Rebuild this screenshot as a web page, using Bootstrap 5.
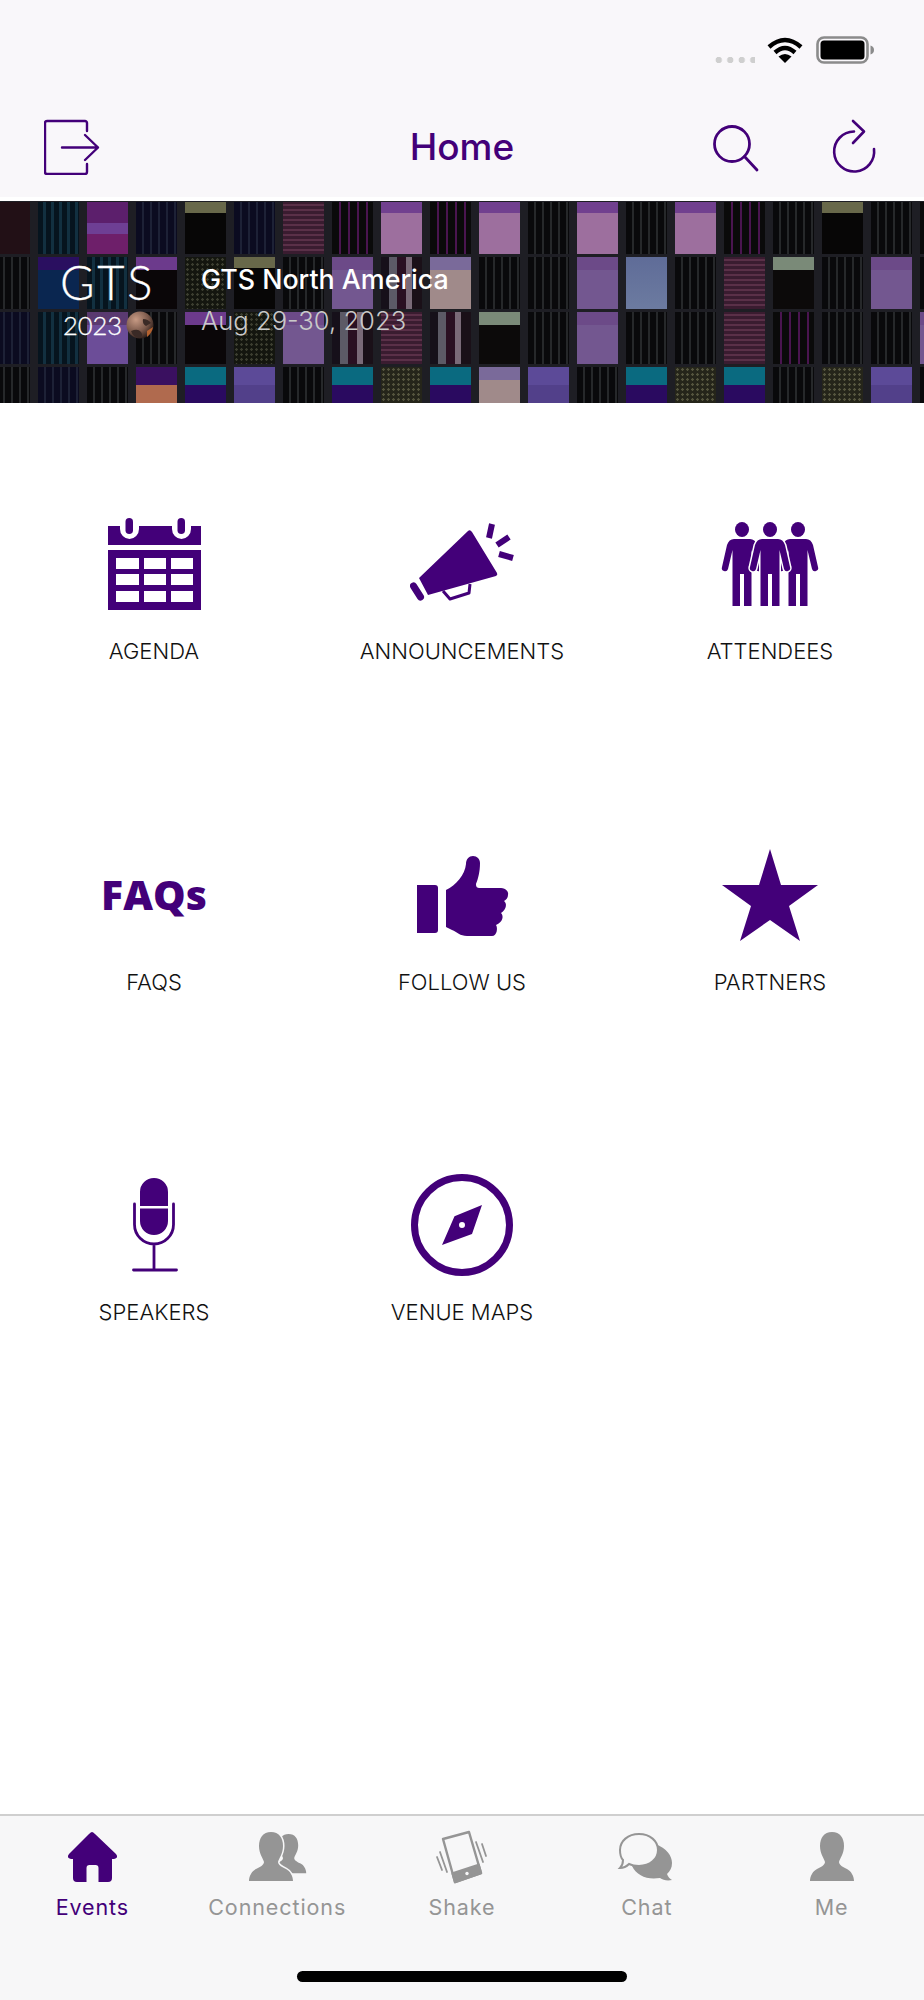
<!DOCTYPE html>
<html lang="en">
<head>
  <meta charset="UTF-8">
  <title>Home</title>
  <link href="https://cdn.jsdelivr.net/npm/bootstrap@5.3.0/dist/css/bootstrap.min.css" rel="stylesheet">
  <style>
    body {
      font-family: "Inter", "Liberation Sans", sans-serif;
      background-color: #fff;
      width: 924px;
      height: 2000px;
      overflow: hidden;
    }

    .top-head {
      height: 197px;
      background-color: #f9f7fa;
    }

    .status-row {
      height: 105px;
      padding: 36px 48px 0 0;
    }

    .signal-dots {
      width: 42px;
      height: 6px;
      margin: 21px 12px 0 0;
      background: radial-gradient(circle, #cfcfcf 3px, transparent 3.5px) 0 0 / 11.5px 6px repeat-x;
    }

    .wifi-icon {
      margin-right: 13px;
    }

    .head-nav {
      padding: 13px 40px 0 44px;
    }

    .head-title {
      color: #430079;
      font-size: 37px;
      font-weight: 500;
      line-height: 58px;
      padding-right: 4px;
    }

    .head-gap {
      gap: 66px;
    }

    .event-banner {
      height: 202px;
      margin-top: 4px;
      background-color: #1e1e24;
    }

    .banner-tiles {
      position: absolute;
      top: 0;
      left: -15px;
      display: grid;
      grid-template-columns: repeat(20, 49px);
      grid-auto-rows: 55px;
      filter: blur(.6px);
    }

    .tile { margin: 1px 4px 2px; }
    .t-a { background: repeating-linear-gradient(90deg, #09090b 0 6px, #26282a 6px 8px); }
    .t-b { background: repeating-linear-gradient(90deg, #0b0b20 0 6px, #1d2136 6px 8px); }
    .t-c { background: repeating-linear-gradient(90deg, #06141e 0 5px, #123040 5px 8px); }
    .t-d { background: #221016; }
    .t-e { background: linear-gradient(#5c1f6c 0 40%, #6e3f94 40% 62%, #6e1f6a 62%); }
    .t-f { background: linear-gradient(#68684a 0 22%, #070606 22%); }
    .t-g { background: repeating-linear-gradient(0deg, #3a1c30 0 3px, #5a3048 3px 5px); }
    .t-h { background: linear-gradient(#71408f 0 22%, #9d6f9e 22%); }
    .t-i { background: repeating-linear-gradient(90deg, #0a0a0a 0 7px, #4a1550 7px 9px); }
    .t-j { background: linear-gradient(#6c3a8c 0 25%, #0a0608 25%); }
    .t-k { background: linear-gradient(#6c4a88 0 25%, #735790 25%); }
    .t-l { background: linear-gradient(90deg, #16101a 0 20%, #5c5a66 20% 40%, #2a1022 40% 60%, #7a6a78 60% 75%, #1a1018 75%); }
    .t-m { background: linear-gradient(#7a6a9a 0 25%, #a08a8a 25%); }
    .t-n { background: radial-gradient(circle, #3c3e30 1px, #14160f 1.5px) 0 0 / 5px 5px; }
    .t-o { background: linear-gradient(#5a3a70 0 25%, #6c4d98 25%); }
    .t-p { background: linear-gradient(#3a1060 0 35%, #b06a4e 35%); }
    .t-q { background: linear-gradient(#0a6a80 0 35%, #2a0a60 35%); }
    .t-r { background: linear-gradient(#5c4a98 0 35%, #52408a 35%); }
    .t-s { background: linear-gradient(#7a8a78 0 25%, #0c0a0a 25%); }
    .t-t { background: linear-gradient(#5f6c98, #6c7ba0); }
    .t-u { background: radial-gradient(circle, #55553e 1px, #25251a 1.5px) 0 0 / 5px 5px; }
    .t-v { background: linear-gradient(#2a0f60 0 25%, #0a2650 25%); }

    .banner-text {
      z-index: 1;
      height: 100%;
      padding: 0 0 5px 60px;
    }

    .logo-block {
      width: 141px;
      margin-bottom: 6px;
      color: #fff;
      font-family: "Lato", sans-serif;
      font-weight: 300;
      -webkit-text-stroke: .3px #fff;
    }

    .logo-name {
      font-size: 47px;
      letter-spacing: 3px;
      line-height: 56px;
    }

    .logo-year {
      font-size: 25.5px;
      line-height: 30px;
      padding-left: 3px;
    }

    .event-name {
      color: #fff;
      font-size: 26.8px;
      font-weight: 500;
      line-height: 42px;
    }

    .event-date {
      color: #c9c9c9;
      font-size: 25.6px;
      font-weight: 300;
      line-height: 42px;
    }

    .menu-grid {
      padding-top: 109px;
    }

    .menu-cell {
      height: 330.5px;
    }

    .menu-icon {
      width: 104px;
      height: 104px;
      color: #430079;
      fill: #430079;
    }

    .faq-mark {
      font-family: "Open Sans", sans-serif;
      font-size: 41px;
      font-weight: 800;
      line-height: 1;
    }

    .menu-label {
      color: #111;
      font-size: 22px;
      font-weight: 300;
      line-height: 28px;
      margin-top: 21px;
    }

    .tab-bar {
      position: absolute;
      left: 0;
      right: 0;
      bottom: 0;
      height: 186px;
      border-top: 2px solid #cfcfcf;
      background-color: #f7f7f8;
      padding-top: 14px;
    }

    .tab-bar .nav-link {
      padding: 0;
      color: #959595;
      font-size: 21.5px;
      letter-spacing: .9px;
      line-height: 30px;
    }

    .tab-bar .nav-link.active-tab {
      color: #430079;
    }

    .tab-icon {
      width: 60px;
      height: 54px;
      margin-bottom: 8px;
      fill: #959595;
    }

    .active-tab .tab-icon {
      fill: #430079;
    }

    .home-bar {
      position: absolute;
      left: 297px;
      bottom: 18px;
      width: 330px;
      height: 11px;
      border-radius: 6px;
      background-color: #000;
    }
  </style>
</head>
<body class="position-relative">

  <header class="top-head">
    <div class="status-row d-flex justify-content-end align-items-start">
      <span class="signal-dots"></span>
      <svg width="36" height="27" viewBox="0 0 36 27" class="wifi-icon">
        <path d="M2 11Q18-3 34 11" fill="none" stroke="#000" stroke-width="4.4"/>
        <path d="M8 16.5Q18 7.5 28 16.5" fill="none" stroke="#000" stroke-width="4.4"/>
        <path d="M18 27L11.5 20.5Q18 15.5 24.5 20.5Z"/>
      </svg>
      <svg width="60" height="28" viewBox="0 0 60 28">
        <rect x="1.5" y="1.5" width="50" height="25" rx="6.5" fill="none" stroke="#8b8b8b" stroke-width="2.6"/>
        <rect x="4.5" y="4.5" width="44" height="19" rx="3.5"/>
        <path d="M54.5 9.5C57 10 58 12 58 14S57 18 54.5 18.500Z" fill="#8b8b8b"/>
      </svg>
    </div>
    <nav class="head-nav row g-0 align-items-center">
      <div class="col-4 d-flex">
        <svg width="56" height="56" viewBox="0 0 56 56" fill="none" stroke="#430079" stroke-width="2.4" stroke-linecap="round" stroke-linejoin="round">
          <path d="M43 12V4a2 2 0 0 0-2-2H3a2 2 0 0 0-2 2v49a2 2 0 0 0 2 2h38a2 2 0 0 0 2-2V45"/>
          <path d="M18 28.500H54M41 16L54 28.500L41 41"/>
        </svg>
      </div>
      <div class="col-4 text-center head-title">Home</div>
      <div class="col-4 d-flex justify-content-end head-gap">
        <svg width="56" height="56" viewBox="0 0 56 56" fill="none" stroke="#430079" stroke-width="2.8" stroke-linecap="round">
          <circle cx="26" cy="25" r="17.500"/>
          <path d="M38.500 37.500L51 51"/>
        </svg>
        <svg width="56" height="56" viewBox="0 0 56 56" fill="none" stroke="#430079" stroke-width="2.6" stroke-linecap="round" stroke-linejoin="round">
          <path d="M26 12.500A20 20 0 1 0 46 30"/>
          <path d="M25 2L36 12.500L25 24"/>
        </svg>
      </div>
    </nav>
  </header>

  <section class="event-banner position-relative overflow-hidden">
    <div class="banner-tiles" id="bannerTiles"></div>
    <div class="banner-text position-relative d-flex align-items-center">
      <div class="logo-block">
        <div class="logo-name">GTS</div>
        <div class="logo-year d-flex align-items-center">2023
          <svg width="28" height="28" viewBox="0 0 28 28" class="ms-1">
            <defs>
              <radialGradient id="globeFill" cx="35%" cy="30%" r="75%">
                <stop offset="0" stop-color="#c79a84"/>
                <stop offset=".6" stop-color="#7c5a4c"/>
                <stop offset="1" stop-color="#2a1c18"/>
              </radialGradient>
            </defs>
            <circle cx="14" cy="14" r="13.500" fill="url(#globeFill)"/>
            <path d="M5 20Q12 17 15 21T13 27Q7 26 5 20ZM17 8Q22 8 25 12L20 15Q16 13 17 8Z" fill="#3a2a26"/>
            <path d="M21 20L27 16Q26 22 21 26Z" fill="#b3612e"/>
          </svg>
        </div>
      </div>
      <div>
        <div class="event-name">GTS North America</div>
        <div class="event-date">Aug 29-30, 2023</div>
      </div>
    </div>
  </section>

  <main class="menu-grid">
    <div class="row row-cols-3 g-0">
      <div class="col menu-cell d-flex flex-column align-items-center">
        <svg class="menu-icon" viewBox="0 0 104 104">
          <path fill-rule="evenodd" d="M6 14H18V17A9.500 10 0 0 0 37 17V14H70V17A9.500 10 0 0 0 89 17V14H99V33H6ZM6 38H99V98H6ZM14 46V57H37V46ZM42 46V57H64V46ZM69 46V57H91V46ZM14 62V73H37V62ZM42 62V73H64V62ZM69 62V73H91V62ZM14 79V90H37V79ZM42 79V90H64V79ZM69 79V90H91V79Z"/>
          <rect x="23.500" y="6" width="7.500" height="16" rx="3.750"/>
          <rect x="75.500" y="6" width="7.500" height="16" rx="3.750"/>
        </svg>
        <div class="menu-label">AGENDA</div>
      </div>
      <div class="col menu-cell d-flex flex-column align-items-center">
        <svg class="menu-icon" viewBox="0 0 104 104">
          <path d="M58 19Q60 17 62 20L87 61Q88 63 86 64L18 83L9 66Z"/>
          <path d="M33 79L40 87L59 81L60 72" fill="none" stroke="#430079" stroke-width="3" stroke-linejoin="round"/>
          <path d="M3.500 74L10.500 85" stroke="#430079" stroke-width="7" stroke-linecap="round"/>
          <path d="M82 12L79 26M99 25L87 33M89 42L103 46" stroke="#430079" stroke-width="6"/>
        </svg>
        <div class="menu-label">ANNOUNCEMENTS</div>
      </div>
      <div class="col menu-cell d-flex flex-column align-items-center">
        <svg class="menu-icon" viewBox="0 0 104 104">
          <defs>
            <path id="personShape" d="M-8 27H8Q13 27 15 33L20 55A3 3 0 0 1 14 57L9.500 38V94H2V62H-2V94H-9.500V38L-14 57A3 3 0 0 1-20 55L-15 33Q-13 27-8 27Z"/>
          </defs>
          <use href="#personShape" x="24"/>
          <use href="#personShape" x="80"/>
          <use href="#personShape" x="52" stroke="#fff" stroke-width="3" paint-order="stroke"/>
          <ellipse cx="24" cy="17.500" rx="7" ry="7.500"/>
          <ellipse cx="52" cy="17.500" rx="7" ry="7.500"/>
          <ellipse cx="80" cy="17.500" rx="7" ry="7.500"/>
        </svg>
        <div class="menu-label">ATTENDEES</div>
      </div>
      <div class="col menu-cell d-flex flex-column align-items-center">
        <div class="menu-icon faq-mark d-flex align-items-center justify-content-center">FAQs</div>
        <div class="menu-label">FAQS</div>
      </div>
      <div class="col menu-cell d-flex flex-column align-items-center">
        <svg class="menu-icon" viewBox="0 0 104 104">
          <path d="M7 42H25Q28 42 28 45V87Q28 90 25 90H7Z"/>
          <path d="M36 47C46 42 55 32 56 21C56 16 59 13 63 13C67 13 70 16 70 20C70 29 68 36 66 41C66 44 67 45 70 45H91C96 45 99 49 98 52C98 55 96 57 94 58C97 60 97 66 91 70C94 73 93 79 86 82C88 85 87 93 82 93H57C50 93 47 89 42 87L36 84Z"/>
        </svg>
        <div class="menu-label">FOLLOW US</div>
      </div>
      <div class="col menu-cell d-flex flex-column align-items-center">
        <svg class="menu-icon" viewBox="0 0 104 104">
          <path d="M52 6L63 42H100L71 63L82 98L52 77L22 98L33 63L4 42H41Z"/>
        </svg>
        <div class="menu-label">PARTNERS</div>
      </div>
      <div class="col menu-cell d-flex flex-column align-items-center">
        <svg class="menu-icon" viewBox="0 0 104 104">
          <path d="M38 33V19A14 14 0 0 1 66 19V33ZM38 35.500H66V48A14 14 0 0 1 38 48Z"/>
          <path d="M32.500 31V51.500A19.500 19.500 0 0 0 71.500 51.500V31M52 71V97M31.500 97H74.500" fill="none" stroke="#430079" stroke-width="2.800" stroke-linecap="round"/>
        </svg>
        <div class="menu-label">SPEAKERS</div>
      </div>
      <div class="col menu-cell d-flex flex-column align-items-center">
        <svg class="menu-icon" viewBox="0 0 104 104">
          <circle cx="52" cy="52" r="47.500" fill="none" stroke="#430079" stroke-width="7"/>
          <path fill-rule="evenodd" d="M72 32L62 61L32 72L44.500 43.300ZM52 49A3 3 0 1 0 52 55A3 3 0 1 0 52 49Z"/>
        </svg>
        <div class="menu-label">VENUE MAPS</div>
      </div>
    </div>
  </main>

  <nav class="tab-bar nav nav-justified align-items-start">
    <div class="nav-item">
      <a class="nav-link active-tab d-flex flex-column align-items-center" href="#">
        <svg class="tab-icon" viewBox="0 0 60 54">
          <path d="M30 2Q31 2 33 4L54 24Q57 28 52 29H50V48Q50 52 46 52H36.500V38Q36.500 35 33.500 35H27.500Q24.500 35 24.500 38V52H15Q11 52 11 48V29H9Q4 28 7 24L27 4Q29 2 30 2Z"/>
        </svg>
        Events
      </a>
    </div>
    <div class="nav-item">
      <a class="nav-link d-flex flex-column align-items-center" href="#">
        <svg class="tab-icon" viewBox="0 0 60 54">
          <defs>
            <path id="bustShape" d="M22 0C30 0 34 6 34 14C34 22 30 26 29 30C29 33 33 35 37 37C41 39 44 44 44 49H0C0 44 3 39 7 37C11 35 15 33 15 30C14 26 10 22 10 14C10 6 14 0 22 0Z"/>
          </defs>
          <use href="#bustShape" transform="translate(24 4) scale(.8)"/>
          <use href="#bustShape" transform="translate(2 2)" stroke="#f7f7f8" stroke-width="3" paint-order="stroke"/>
        </svg>
        Connections
      </a>
    </div>
    <div class="nav-item">
      <a class="nav-link d-flex flex-column align-items-center" href="#">
        <svg class="tab-icon" viewBox="0 0 60 54">
          <path d="M11 9L37 2L49 43L23 52Z" fill="none" stroke="#959595" stroke-width="2.400" stroke-linejoin="round"/>
          <path d="M20.600 43.400L46.600 34.800L49 43L23 52Z" stroke="#959595" stroke-width="2.400" stroke-linejoin="round"/>
          <circle cx="35" cy="43.500" r="1.700" fill="#f7f7f8"/>
          <path d="M5 27L10 40M8 22L15 42M44 12L51 32M50 14L54 26" fill="none" stroke="#959595" stroke-width="1.800" stroke-linecap="round"/>
        </svg>
        Shake
      </a>
    </div>
    <div class="nav-item">
      <a class="nav-link d-flex flex-column align-items-center" href="#">
        <svg class="tab-icon" viewBox="0 0 60 54">
          <path d="M38 14C50 18 55 26 55 33C55 38 53 41 50 44C51 47 53 49 55 50C50 51 46 50 43 48C30 50 20 46 15 36Z"/>
          <path d="M22 4C33 4 41 11 41 20C41 29 33 36 22 36C17 36 14 35 12 34C9 37 6 38 3 38C5 36 6 33 6 30C3 27 3 24 3 20C3 11 11 4 22 4Z" fill="#f7f7f8" stroke="#959595" stroke-width="2"/>
        </svg>
        Chat
      </a>
    </div>
    <div class="nav-item">
      <a class="nav-link d-flex flex-column align-items-center" href="#">
        <svg class="tab-icon" viewBox="0 0 60 54">
          <use href="#bustShape" transform="translate(8 2)"/>
        </svg>
        Me
      </a>
    </div>
    <div class="home-bar"></div>
  </nav>

  <script>
    // one letter per chip tile, see the t-* classes
    const tileRows = [
      "dcebfbgihihahahiafai",
      "avcjnfaklmaaktagsaka",
      "bcoajnklglsakaagiaak",
      "abapqraquqmraquqaura"
    ];
    const tileBox = document.getElementById('bannerTiles');
    tileRows.forEach(function(row) {
      row.split('').forEach(function(letter) {
        const tile = document.createElement('div');
        tile.className = 'tile t-' + letter;
        tileBox.appendChild(tile);
      });
    });
  </script>
</body>
</html>
